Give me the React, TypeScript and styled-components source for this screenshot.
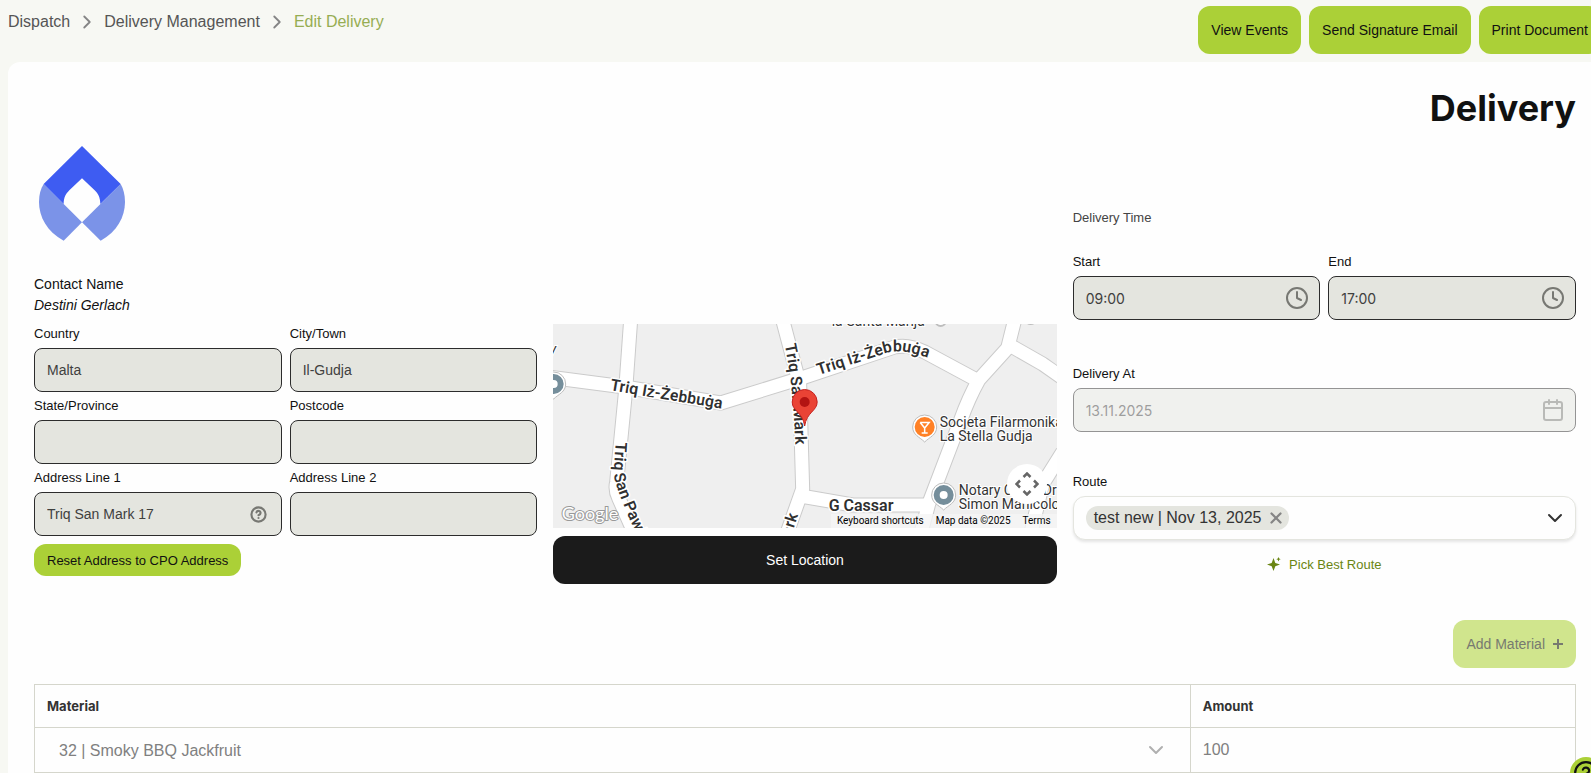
import React from 'react';
import styled, { createGlobalStyle, css } from 'styled-components';
import { Calendar, ChevronDown, ChevronRight, CircleHelp, Clock, X } from 'lucide-react';

const GlobalStyle = createGlobalStyle`
  * { box-sizing: border-box; }
  body {
    margin: 0;
    background: #f7f8f3;
    color: #111111;
    font-family: "Liberation Sans", Arial, sans-serif;
    font-size: 14px;
    overflow: hidden;
  }
  button, input, select { font: inherit; color: inherit; }
  button { cursor: pointer; }
`;

const Page = styled.div`
  min-height: 100vh;
  padding-left: 8px;
  display: flex;
  flex-direction: column;
`;

const TopBar = styled.header`
  display: flex;
  justify-content: space-between;
  align-items: flex-start;
  padding: 6px 0 8px;
  margin-right: -10px;
`;

const Breadcrumbs = styled.nav`
  display: flex;
  align-items: center;
  gap: 6px;
  height: 32px;
  font-size: 16px;
  svg { color: #858585; }
`;

const Crumb = styled.a<{ $current?: boolean }>`
  color: ${(p) => (p.$current ? '#96ad52' : '#555555')};
  text-decoration: none;
`;

const Actions = styled.div`
  display: flex;
  gap: 8px;
`;

const PrimaryButton = styled.button<{ $small?: boolean }>`
  display: inline-flex;
  align-items: center;
  gap: 8px;
  height: ${(p) => (p.$small ? 32 : 48)}px;
  padding: 0 13px;
  border: 0;
  border-radius: 12px;
  background: #abd037;
  font-size: ${(p) => (p.$small ? 13 : 14)}px;
  white-space: nowrap;
  &:disabled { background: #d0e58d; color: #777a70; }
`;

const Panel = styled.main`
  flex: 1;
  background: #fefefe;
  border-radius: 12px 0 0 0;
  padding: 24px 15px 0 26px;
`;

const Title = styled.h1`
  margin: 0 0 16px;
  font-family: Inter, sans-serif;
  font-size: 36px;
  line-height: 44px;
  font-weight: 700;
  text-align: right;
`;

const Columns = styled.div`
  display: grid;
  grid-template-columns: repeat(3, minmax(0, 1fr));
  gap: 16px;
  align-items: end;
`;

const Column = styled.section`
  display: flex;
  flex-direction: column;
  align-items: stretch;
`;

const InfoColumn = styled(Column)`
  padding-bottom: 8px;
`;

const Logo = styled.svg`
  width: 96px;
  height: 96px;
`;

const Contact = styled.div`
  margin: 32px 0 8px;
  line-height: 21px;
`;

const ContactName = styled.div`
  font-style: italic;
`;

const FieldGrid = styled.div`
  display: grid;
  grid-template-columns: repeat(2, minmax(0, 1fr));
  gap: 4px 8px;
  margin-bottom: 8px;
`;

const FieldWrap = styled.div`
  display: flex;
  flex-direction: column;
  gap: 4px;
`;

const Label = styled.label`
  font-size: 13px;
  line-height: 20px;
`;

const InputBox = styled.div<{ $faded?: boolean }>`
  display: flex;
  align-items: center;
  height: 44px;
  padding: 0 10px 0 12px;
  border: 1px solid #2c2c2c;
  border-radius: 8px;
  background: #e4e5df;
  opacity: ${(p) => (p.$faded ? 0.5 : 1)};
`;

const IconSlot = styled.span`
  display: flex;
  flex: none;
  align-items: center;
  justify-content: center;
  width: 24px;
  color: #777873;
`;

const TextInput = styled.input<{ $numeric?: boolean }>`
  flex: 1;
  min-width: 0;
  padding: 0;
  border: 0;
  outline: 0;
  background: transparent;
  color: #3f403e;
  ${(p) => p.$numeric && css`font-family: Inter, sans-serif;`}
`;

const ResetRow = styled.div`
  display: flex;
`;

const MapFrame = styled.div`
  position: relative;
  height: 204px;
  margin-bottom: 8px;
  overflow: hidden;
  background: #efefef;
  font-family: Roboto, sans-serif;
`;

const MapDrawing = styled.svg`
  display: block;
  width: 100%;
  height: 100%;
`;

const CameraButton = styled.button`
  position: absolute;
  right: 10px;
  bottom: 24px;
  width: 40px;
  height: 40px;
  padding: 8px;
  border: 0;
  border-radius: 50%;
  background: #ffffff;
  color: #666666;
`;

const MapFooter = styled.div`
  position: absolute;
  right: 0;
  bottom: 0;
  display: flex;
  height: 14px;
`;

const footerPart = css`
  padding: 0 6px;
  border: 0;
  background: rgba(245, 245, 245, 0.8);
  color: #000000;
  font-family: Roboto, sans-serif;
  font-size: 10px;
  line-height: 14px;
  text-decoration: none;
`;
const FooterButton = styled.button`${footerPart}`;
const FooterText = styled.span`${footerPart}`;
const FooterLink = styled.a`${footerPart}`;

const LocationButton = styled.button`
  height: 48px;
  border: 0;
  border-radius: 12px;
  background: #1b1b1b;
  color: #ffffff;
`;

const GroupTitle = styled.div`
  margin-bottom: 24px;
  font-size: 13px;
  line-height: 20px;
  color: #444444;
`;

const TimeRow = styled.div`
  display: grid;
  grid-template-columns: repeat(2, minmax(0, 1fr));
  gap: 8px;
  margin-bottom: 44px;
`;

const DateRow = styled.div`
  margin-bottom: 40px;
`;

const RouteBox = styled.div`
  display: flex;
  align-items: center;
  height: 44px;
  padding: 0 8px 0 12px;
  border: 1px solid #e4e5df;
  border-radius: 12px;
  background: #fefefe;
  box-shadow: 0 2px 3px rgba(0, 0, 0, 0.1);
`;

const Chip = styled.span`
  display: flex;
  align-items: center;
  gap: 6px;
  height: 24px;
  padding: 0 4px 0 8px;
  border-radius: 12px;
  background: #e4e5df;
  color: #333333;
  font-size: 16px;
  white-space: nowrap;
`;

const IconButton = styled.button`
  display: flex;
  padding: 0;
  border: 0;
  background: transparent;
  color: #333333;
`;

const ChipRemove = styled(IconButton)`
  color: #858585;
`;

const PickButton = styled.button`
  display: inline-flex;
  align-items: center;
  align-self: center;
  gap: 8px;
  height: 24px;
  margin-top: 12px;
  padding: 0;
  border: 0;
  background: transparent;
  color: #6a8512;
  font-size: 13px;
`;

const TableActions = styled.div`
  display: flex;
  justify-content: flex-end;
  margin: 36px 0 16px;
`;

const MaterialTable = styled.table`
  width: 100%;
  border-collapse: collapse;
  table-layout: fixed;
  color: #808080;
  th, td { border: 1px solid #d5d6cc; padding: 0 12px; text-align: left; }
  th { height: 43px; color: #333333; font-family: Inter, sans-serif; font-size: 13px; font-weight: 700; }
  th:first-child { width: 75%; }
  td { height: 45px; font-size: 16px; }
`;

const SelectWrap = styled.div`
  display: flex;
  align-items: center;
  padding: 0 10px 0 12px;
  svg { flex: none; color: #b0b0b0; }
`;

const MaterialSelect = styled.select`
  flex: 1;
  appearance: none;
  border: 0;
  padding: 0;
  background: transparent;
  opacity: 1;
  color: #808080;
`;

const AmountInput = styled.input`
  width: 100%;
  padding: 0;
  border: 0;
  background: transparent;
  color: #808080;
`;

const HelpBubble = styled.button`
  position: fixed;
  right: -11px;
  bottom: -16px;
  display: flex;
  align-items: center;
  justify-content: center;
  width: 32px;
  height: 32px;
  padding: 0;
  border: 0;
  border-radius: 50%;
  background: #abd037;
`;

function BrandLogo() {
  return (
    <Logo viewBox="102 438 288 288" role="img" aria-label="Company logo">
      <path fill="#7b93e8" d="M131 552 246 667 191 722C141 696 117 650 117 606c0-22 5-40 14-54Z" />
      <path fill="#7b93e8" d="M362 552 246 667 302 722C351 696 375 650 375 606c0-22-5-40-13-54Z" />
      <path fill="#3e5cf2" d="m246 438 116 114-61 60c0-20-7-31-17-41l-38-36-38 36c-11 11-17 22-17 41l-60-60Z" />
    </Logo>
  );
}

type FieldProps = {
  id: string;
  label: string;
  value?: string;
  icon?: React.ReactNode;
  faded?: boolean;
  numeric?: boolean;
};

function Field({ id, label, value = '', icon, faded, numeric }: FieldProps) {
  return (
    <FieldWrap>
      <Label htmlFor={id}>{label}</Label>
      <InputBox $faded={faded}>
        <TextInput id={id} defaultValue={value} disabled={faded} readOnly $numeric={numeric} />
        {icon && <IconSlot>{icon}</IconSlot>}
      </InputBox>
    </FieldWrap>
  );
}

const roads = [
  'M78-4 73 66 64 158Q62 166 66 174L82 210',
  'M-4 53 72 63 168 79 252 53 342 23Q356 20 372 28L424 56',
  'M230-4 247 60 250 165 234 210',
  'M462-4 455 24 426 56Q416 74 408 96L376 180 368 210',
  'M455 20 490 40 510 54',
  'M248 172 300 181H374',
  'M510 128 490 160 478 210',
];

const placePin = 'c-5-5-12-7-12-15a12 12 0 0 1 24 0c0 8-7 10-12 15Z';

function StreetMap() {
  return (
    <MapDrawing viewBox="0 0 504 204" preserveAspectRatio="xMidYMid slice" role="img" aria-label="Map of Il-Gudja">
      <defs>
        <path id="st-west" d="M57 66 110 75 184 87" />
        <path id="st-east" d="M266 51 334 29Q352 23 388 39" />
        <path id="st-mark" d="M232 21Q241 60 243 135" />
        <path id="st-pawl" d="M63 118 61 150Q62 164 90 224" />
        <path id="st-mark-south" d="M234 226 249 180" />
      </defs>
      <g fill="none" stroke="#cbcbcb" strokeWidth="15" strokeLinejoin="round">
        {roads.map((d) => <path key={d} d={d} />)}
      </g>
      <g fill="none" stroke="#ffffff" strokeWidth="13" strokeLinejoin="round">
        {roads.map((d) => <path key={d} d={d} />)}
      </g>
      <g fill="#303030" stroke="#ffffff" strokeWidth="3" paintOrder="stroke" strokeLinejoin="round" fontWeight="600" fontSize="16">
        <text><textPath href="#st-west">Triq Iż-Żebbuġa</textPath></text>
        <text><textPath href="#st-east">Triq Iż-Żebbuġa</textPath></text>
        <text><textPath href="#st-mark">Triq San Mark</textPath></text>
        <text><textPath href="#st-pawl">Triq San Pawl</textPath></text>
        <text><textPath href="#st-mark-south">Mark</textPath></text>
        <text x="276" y="187">G Cassar</text>
      </g>
      <g fill="#333333" stroke="#ffffff" strokeWidth="2" paintOrder="stroke" fontSize="14">
        <text x="279" y="2">la-Santa Marija</text>
        <text x="-3" y="30" fontStyle="italic">y</text>
        <text x="387" y="103">Socjeta Filarmonika</text>
        <text x="387" y="117">La Stella Gudja</text>
        <text x="406" y="171">Notary Clint - Dr</text>
        <text x="406" y="185">Simon Manicolo</text>
      </g>
      <g fill="#ffffff" stroke="#bdbdbd" strokeWidth="1">
        <path d={`M372 118${placePin}`} />
        <path d={`M391 186${placePin}`} />
        <path d={`M1 75${placePin}`} />
        <circle cx="388" cy="-3" r="5" strokeWidth="2" />
        <circle cx="478" cy="-6" r="6" strokeWidth="2" />
      </g>
      <circle cx="372" cy="103" r="10" fill="#ff8126" />
      <path fill="none" stroke="#ffffff" strokeWidth="1.5" d="M367.5 98.500h9l-4.500 5.500-4.500-5.500M372 104v5M369 109h6" />
      <circle cx="391" cy="171" r="7" fill="#ffffff" stroke="#758e9b" strokeWidth="6" />
      <circle cx="1" cy="60" r="7" fill="#ffffff" stroke="#758e9b" strokeWidth="6" />
      <path fill="#ea4335" stroke="#c5221f" strokeWidth="1" d="M252 102C250 88 239.500 87 239.500 78a12.500 12.500 0 0 1 25 0C264.500 87 254 88 252 102Z" />
      <circle cx="252" cy="78" r="5" fill="#b31412" />
      <text x="9" y="196" fill="#ffffff" stroke="#999999" strokeWidth="2" paintOrder="stroke" fontFamily="Lato, sans-serif" fontSize="18">Google</text>
    </MapDrawing>
  );
}

function PlusIcon() {
  return (
    <svg width="10" height="10" viewBox="0 0 10 10" stroke="currentColor" strokeWidth="2" aria-hidden="true">
      <path d="M5 0v10M0 5h10" />
    </svg>
  );
}

function SparkleIcon() {
  return (
    <svg width="14" height="14" viewBox="0 0 14 14" fill="currentColor" aria-hidden="true">
      <path d="M6.500 1 8.300 6 13 7.500 8.300 9.200 6.500 14 4.700 9.200 0 7.500 4.700 6ZM11.500 0l.7 1.600 1.500.6-1.500.6-.7 1.600-.7-1.600L9.300 2.200l1.500-.6Z" />
    </svg>
  );
}

export default function App() {
  return (
    <>
      <GlobalStyle />
      <Page>
        <TopBar>
          <Breadcrumbs aria-label="Breadcrumb">
            <Crumb href="#dispatch">Dispatch</Crumb>
            <ChevronRight size={22} strokeWidth={2} />
            <Crumb href="#deliveries">Delivery Management</Crumb>
            <ChevronRight size={22} strokeWidth={2} />
            <Crumb href="#edit" $current aria-current="page">Edit Delivery</Crumb>
          </Breadcrumbs>
          <Actions>
            <PrimaryButton>View Events</PrimaryButton>
            <PrimaryButton>Send Signature Email</PrimaryButton>
            <PrimaryButton>Print Document</PrimaryButton>
          </Actions>
        </TopBar>

        <Panel>
          <Title>Delivery</Title>
          <Columns>
            <InfoColumn>
              <BrandLogo />
              <Contact>
                <div>Contact Name</div>
                <ContactName>Destini Gerlach</ContactName>
              </Contact>
              <FieldGrid>
                <Field id="country" label="Country" value="Malta" />
                <Field id="city" label="City/Town" value="Il-Gudja" />
                <Field id="state" label="State/Province" />
                <Field id="postcode" label="Postcode" />
                <Field id="line1" label="Address Line 1" value="Triq San Mark 17" icon={<CircleHelp size={17} strokeWidth={3} />} />
                <Field id="line2" label="Address Line 2" />
              </FieldGrid>
              <ResetRow>
                <PrimaryButton $small>Reset Address to CPO Address</PrimaryButton>
              </ResetRow>
            </InfoColumn>

            <Column>
              <MapFrame>
                <StreetMap />
                <CameraButton aria-label="Map camera controls">
                  <svg width="24" height="24" viewBox="0 0 24 24" fill="none" stroke="currentColor" strokeWidth="2.5">
                    <path d="m8.500 5 3.500-3.500L15.500 5M8.500 19l3.500 3.500 3.500-3.500M5 8.500 1.500 12 5 15.500M19 8.500l3.500 3.500-3.500 3.500" />
                  </svg>
                </CameraButton>
                <MapFooter>
                  <FooterButton>Keyboard shortcuts</FooterButton>
                  <FooterText>Map data ©2025</FooterText>
                  <FooterLink href="#terms">Terms</FooterLink>
                </MapFooter>
              </MapFrame>
              <LocationButton>Set Location</LocationButton>
            </Column>

            <InfoColumn>
              <GroupTitle>Delivery Time</GroupTitle>
              <TimeRow>
                <Field id="start" label="Start" value="09:00" numeric icon={<Clock size={24} />} />
                <Field id="end" label="End" value="17:00" numeric icon={<Clock size={24} />} />
              </TimeRow>
              <DateRow>
                <Field id="date" label="Delivery At" value="13.11.2025" numeric faded icon={<Calendar size={24} />} />
              </DateRow>
              <FieldWrap>
                <Label htmlFor="route">Route</Label>
                <RouteBox>
                  <Chip>
                    test new | Nov 13, 2025
                    <ChipRemove aria-label="Remove route"><X size={18} strokeWidth={3} /></ChipRemove>
                  </Chip>
                  <TextInput id="route" role="combobox" aria-expanded="false" />
                  <IconButton aria-label="Open routes"><ChevronDown size={24} /></IconButton>
                </RouteBox>
              </FieldWrap>
              <PickButton>
                <SparkleIcon />
                Pick Best Route
              </PickButton>
            </InfoColumn>
          </Columns>

          <TableActions>
            <PrimaryButton disabled>Add Material <PlusIcon /></PrimaryButton>
          </TableActions>

          <MaterialTable>
            <thead>
              <tr><th scope="col">Material</th><th scope="col">Amount</th></tr>
            </thead>
            <tbody>
              <tr>
                <td>
                  <SelectWrap>
                    <MaterialSelect aria-label="Material" disabled defaultValue="32">
                      <option value="32">32 | Smoky BBQ Jackfruit</option>
                    </MaterialSelect>
                    <ChevronDown size={24} />
                  </SelectWrap>
                </td>
                <td><AmountInput aria-label="Amount" defaultValue="100" disabled /></td>
              </tr>
            </tbody>
          </MaterialTable>
        </Panel>
      </Page>
      <HelpBubble aria-label="Help"><CircleHelp size={26} /></HelpBubble>
    </>
  );
}
